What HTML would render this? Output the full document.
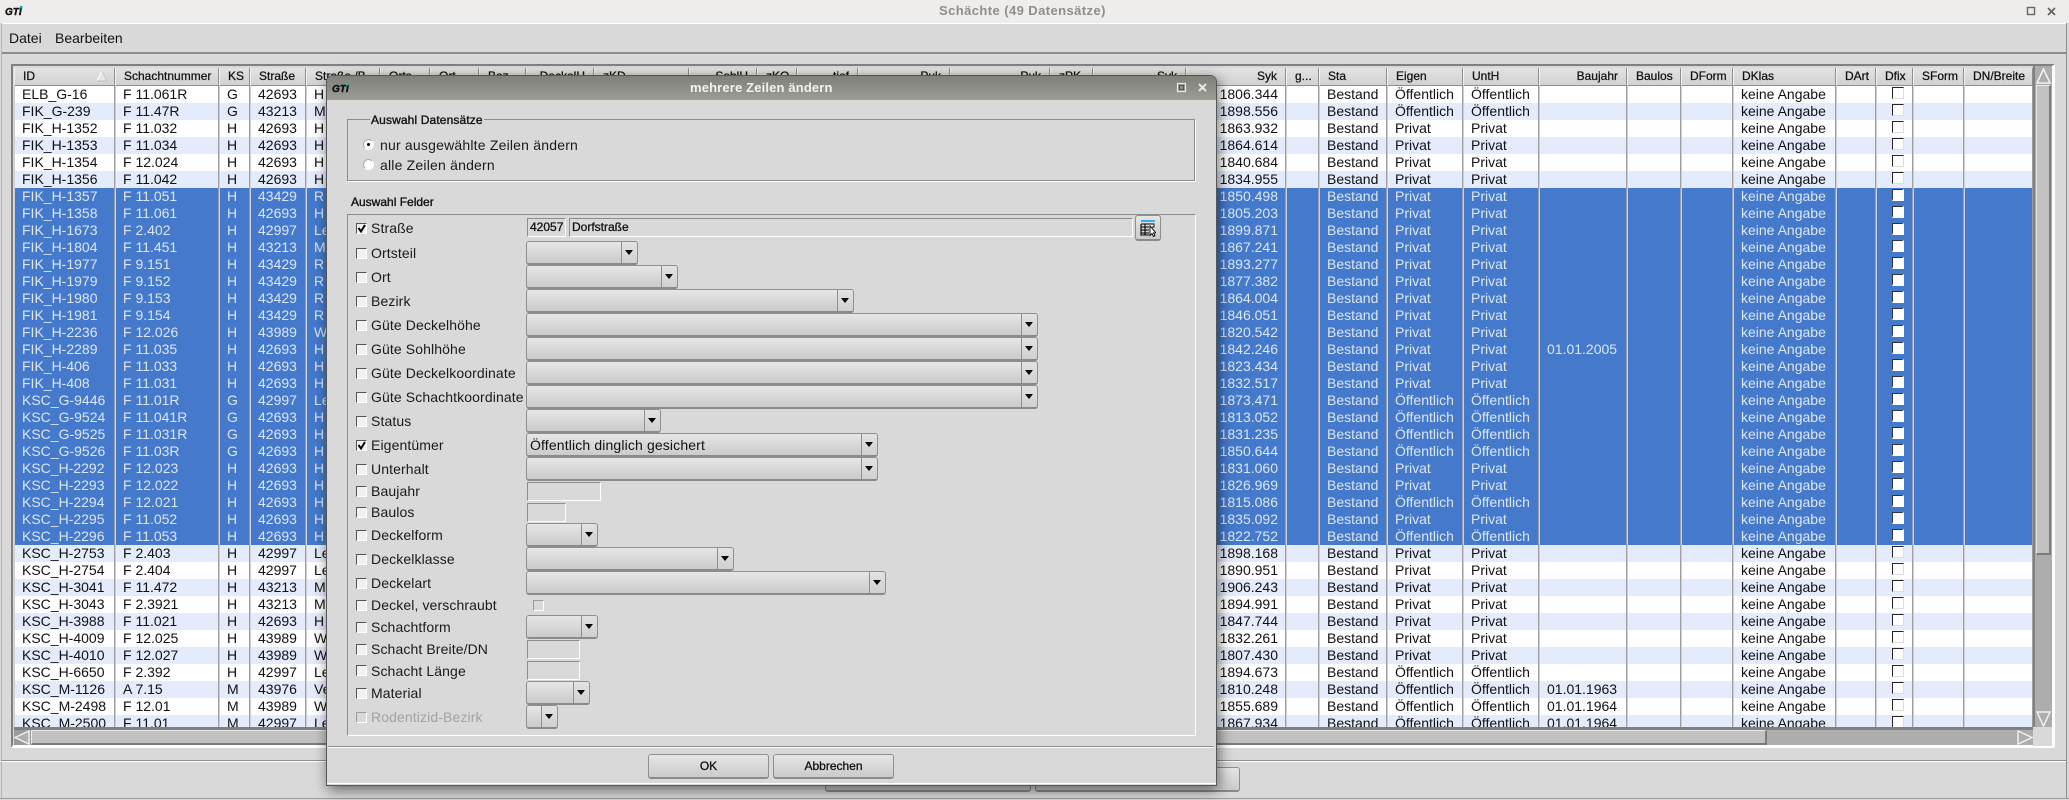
<!DOCTYPE html>
<html lang="de"><head><meta charset="utf-8"><title>Schächte</title>
<style>
*{box-sizing:border-box}
html,body{margin:0;padding:0;width:2069px;height:800px;overflow:hidden;background:#d9d9d9;font-family:"Liberation Sans",sans-serif;color:#111}
.a{position:absolute}
#tb{left:0;top:0;width:2069px;height:23px;background:#eeedeb}
#tt{left:939px;top:2px;font-weight:bold;font-size:13px;line-height:18px;letter-spacing:.42px;color:#8e8e8e;white-space:nowrap}
#mb{left:1px;top:23px;width:2065px;height:31px;background:#d9d9d9;border-top:1px solid #fff;border-bottom:2px solid #8c8c8c;font-size:14px;line-height:28px}
#mb span{position:absolute;top:0}
#fr{left:11px;top:64px;width:2044px;height:684px;border-top:2px solid #808080;border-left:2px solid #808080;border-right:3px solid #fff;border-bottom:3px solid #fff}
#hd,#bd{border-collapse:separate;border-spacing:0;table-layout:fixed}
#hw{left:14px;top:68px;width:2019px;height:18px;overflow:hidden}
#hd{width:2019px;font-size:12px;-webkit-text-stroke:.25px #111}
#hd td{height:18px;line-height:17px;padding:0 8px;white-space:nowrap;overflow:hidden;background:linear-gradient(#e2e2e2,#d2d2d2);border-right:1px solid #8f8f8f;border-left:1px solid #f2f2f2;border-bottom:1px solid #8f8f8f;vertical-align:top}
#hd td.r{text-align:right}
#bw{left:14px;top:86px;width:2019px;height:641px;overflow:hidden;background:#fff}
#bd{width:2019px;font-size:14px}
#bd td{height:17px;line-height:17px;padding:0 0 0 7px;white-space:nowrap;overflow:hidden;border-right:1px solid #9f9f9f;border-left:1px solid #cfcfcf;vertical-align:top;background:#fff;color:#111}
#bd tr:nth-child(even) td{background:#e4ebfc}
#bd tr.s td{background:#4479cc;color:#dbe6f8}
#bd td.r{text-align:right;padding:0 7px 0 0}
#bd td i{display:block;margin:1px 0 0 8px;width:12px;height:12px;background:#fff;border-top:1px solid #222;border-left:1px solid #222;border-right:1px solid #ddd;border-bottom:1px solid #ddd}
#bd tr.s td i{border-top-color:#333;border-left-color:#333;border-right:2px solid #fff;border-bottom:2px solid #fff}
.fl{background:#808080}
#vs{left:2035px;top:66px;width:17px;height:661px;background:#adadad}
#vt{left:2036px;top:85px;width:15px;height:470px;background:#c2c2c2;border-right:2px solid #7a7a7a;border-bottom:2px solid #7a7a7a;border-left:1px solid #e8e8e8;border-top:1px solid #eee}
#hs{left:14px;top:729px;width:2019px;height:16px;background:#adadad;border-top:1px solid #808080}
#ht{left:31px;top:730px;width:1736px;height:15px;background:#c2c2c2;border-right:2px solid #7a7a7a;border-bottom:2px solid #7a7a7a;border-left:1px solid #eee;border-top:1px solid #e8e8e8}
#cn{left:2033px;top:727px;width:19px;height:19px;background:#d9d9d9}
#sp{left:1px;top:760px;width:2065px;height:2px;background:#8f8f8f;border-bottom:1px solid #fff}
#we{left:0;top:798px;width:2069px;height:1px;background:#9a9a9a}
#wr{left:2066px;top:23px;width:1px;height:776px;background:#8f8f8f}
#wl{left:1px;top:23px;width:1px;height:776px;background:#b5b5b5}
.pb{border:1px solid #8f8f8f;border-bottom:2px solid #8a8a8a;border-radius:3px;background:linear-gradient(#e6e6e6,#cbcbcb)}
#dl{left:326px;top:75px;width:891px;height:711px;background:#d9d9d9;border:1px solid #565656;border-radius:7px 7px 0 0;box-shadow:2px 4px 14px rgba(0,0,0,.55)}
#dt{left:327px;top:76px;width:889px;height:24px;background:linear-gradient(#7e8079,#9b9d96);border-radius:6px 6px 0 0}
#dtt{left:690px;top:79px;font-weight:bold;font-size:13px;line-height:18px;letter-spacing:.15px;color:#f2f2ee;white-space:nowrap}
#di{left:327px;top:783px;width:889px;height:1px;background:#fff}
.gb{left:347px;top:119px;width:848px;height:62px;border:1px solid #8c8c8c;box-shadow:1px 1px 0 #fff}
.lg{font-size:12px;line-height:14px;background:#d9d9d9;white-space:nowrap;-webkit-text-stroke:.35px #111}
.fb{left:347px;top:214px;width:849px;height:522px;border-top:1px solid #8c8c8c;border-left:1px solid #8c8c8c;border-right:1px solid #fff;border-bottom:1px solid #fff}
.lb{left:371px;font-size:14px;line-height:18px;white-space:nowrap;color:#1a1a1a;letter-spacing:.11px}
.ck{left:356px;width:11px;height:11px;background:#f1f1f1;border-top:1px solid #555;border-left:1px solid #555;border-right:1px solid #fff;border-bottom:1px solid #fff}
.tx{background:#d9d9d9;border-top:1px solid #8c8c8c;border-left:1px solid #8c8c8c;border-right:1px solid #fff;border-bottom:1px solid #fff;font-size:12px;line-height:16px;padding-left:2px;white-space:nowrap;-webkit-text-stroke:.3px #111}
.cb{left:526px;height:24px;border:1px solid #8f8f8f;border-bottom:2px solid #8a8a8a;border-radius:3px;background:linear-gradient(#e6e6e6,#cbcbcb);font-size:14px;line-height:22px;padding-left:3px;white-space:nowrap;letter-spacing:.14px}
.cb b{position:absolute;right:0;top:0;bottom:0;width:16px;border-left:1px solid #8f8f8f;background:linear-gradient(#e2e2e2,#d0d0d0);border-radius:0 2px 2px 0}
.cb b:after{content:"";position:absolute;left:3px;top:8px;width:0;height:0;border-left:4.5px solid transparent;border-right:4.5px solid transparent;border-top:5px solid #000}
.btn{top:754px;height:25px;width:121px;font-size:12px;line-height:23px;text-align:center;-webkit-text-stroke:.3px #111}
.rd{left:363px;width:11px;height:11px;border-radius:50%;background:#fff;border:1px solid #ababab;border-right-color:#fff;border-bottom-color:#fff}
</style></head><body>
<div class="a" id="tb"></div>
<div class="a" id="tt">Schächte (49 Datensätze)</div>
<svg class="a" style="left:5px;top:5px" width="20" height="11"><text x="0" y="10" font-family="Liberation Sans" font-size="10" font-weight="bold" font-style="italic" fill="#111" stroke="#111" stroke-width=".4">GTI</text><rect x="15" y="1" width="2.5" height="2.5" fill="#1aa"/></svg>
<svg class="a" style="left:2026px;top:6px" width="34" height="11" fill="none" stroke="#666" stroke-width="1.4"><rect x="1.500" y="1.500" width="7" height="7"/><path d="M22 2l7 7M29 2l-7 7" stroke-width="1.800"/></svg>
<div class="a" id="mb"><span style="left:8px">Datei</span><span style="left:54px">Bearbeiten</span></div>
<div class="a" id="wl"></div><div class="a" id="wr"></div>
<div class="a" id="fr"></div>
<div class="a" id="hw"><table id="hd"><colgroup><col style="width:101px"><col style="width:104px"><col style="width:31px"><col style="width:56px"><col style="width:74px"><col style="width:50px"><col style="width:49px"><col style="width:47px"><col style="width:68px"><col style="width:95px"><col style="width:68px"><col style="width:40px"><col style="width:61px"><col style="width:92px"><col style="width:100px"><col style="width:43px"><col style="width:93px"><col style="width:100px"><col style="width:33px"><col style="width:68px"><col style="width:76px"><col style="width:76px"><col style="width:88px"><col style="width:54px"><col style="width:52px"><col style="width:103px"><col style="width:40px"><col style="width:37px"><col style="width:51px"><col style="width:69px"></colgroup><tr><td>ID</td><td>Schachtnummer</td><td>KS</td><td>Straße</td><td>Straße /B</td><td>Orts</td><td>Ort</td><td>Bez</td><td class="r">DeckelH</td><td>zKD</td><td class="r">SohlH</td><td>zKO</td><td class="r">tief</td><td class="r">Puk</td><td class="r">Puk</td><td>zPK</td><td class="r">Syk</td><td class="r">Syk</td><td>g...</td><td>Sta</td><td>Eigen</td><td>UntH</td><td class="r">Baujahr</td><td>Baulos</td><td>DForm</td><td>DKlas</td><td>DArt</td><td>Dfix</td><td>SForm</td><td>DN/Breite</td></tr></table></div>
<svg class="a" style="left:96px;top:70px" width="12" height="12"><path d="M6 1L1 11h10z" fill="#e6e6e6" stroke="#fff"/><path d="M6 1L11 11H1" fill="none" stroke="#aaa" stroke-width=".7"/></svg>
<div class="a" id="bw"><table id="bd"><colgroup><col style="width:101px"><col style="width:104px"><col style="width:31px"><col style="width:56px"><col style="width:880px"><col style="width:100px"><col style="width:33px"><col style="width:68px"><col style="width:76px"><col style="width:76px"><col style="width:88px"><col style="width:54px"><col style="width:52px"><col style="width:103px"><col style="width:40px"><col style="width:37px"><col style="width:51px"><col style="width:69px"></colgroup>
<tr><td>ELB_G-16</td><td>F 11.061R</td><td>G</td><td>42693</td><td>H</td><td class="r">1806.344</td><td></td><td>Bestand</td><td>Öffentlich</td><td>Öffentlich</td><td></td><td></td><td></td><td>keine Angabe</td><td></td><td><i></i></td><td></td><td></td></tr>
<tr><td>FIK_G-239</td><td>F 11.47R</td><td>G</td><td>43213</td><td>M</td><td class="r">1898.556</td><td></td><td>Bestand</td><td>Öffentlich</td><td>Öffentlich</td><td></td><td></td><td></td><td>keine Angabe</td><td></td><td><i></i></td><td></td><td></td></tr>
<tr><td>FIK_H-1352</td><td>F 11.032</td><td>H</td><td>42693</td><td>H</td><td class="r">1863.932</td><td></td><td>Bestand</td><td>Privat</td><td>Privat</td><td></td><td></td><td></td><td>keine Angabe</td><td></td><td><i></i></td><td></td><td></td></tr>
<tr><td>FIK_H-1353</td><td>F 11.034</td><td>H</td><td>42693</td><td>H</td><td class="r">1864.614</td><td></td><td>Bestand</td><td>Privat</td><td>Privat</td><td></td><td></td><td></td><td>keine Angabe</td><td></td><td><i></i></td><td></td><td></td></tr>
<tr><td>FIK_H-1354</td><td>F 12.024</td><td>H</td><td>42693</td><td>H</td><td class="r">1840.684</td><td></td><td>Bestand</td><td>Privat</td><td>Privat</td><td></td><td></td><td></td><td>keine Angabe</td><td></td><td><i></i></td><td></td><td></td></tr>
<tr><td>FIK_H-1356</td><td>F 11.042</td><td>H</td><td>42693</td><td>H</td><td class="r">1834.955</td><td></td><td>Bestand</td><td>Privat</td><td>Privat</td><td></td><td></td><td></td><td>keine Angabe</td><td></td><td><i></i></td><td></td><td></td></tr>
<tr class="s"><td>FIK_H-1357</td><td>F 11.051</td><td>H</td><td>43429</td><td>R</td><td class="r">1850.498</td><td></td><td>Bestand</td><td>Privat</td><td>Privat</td><td></td><td></td><td></td><td>keine Angabe</td><td></td><td><i></i></td><td></td><td></td></tr>
<tr class="s"><td>FIK_H-1358</td><td>F 11.061</td><td>H</td><td>42693</td><td>H</td><td class="r">1805.203</td><td></td><td>Bestand</td><td>Privat</td><td>Privat</td><td></td><td></td><td></td><td>keine Angabe</td><td></td><td><i></i></td><td></td><td></td></tr>
<tr class="s"><td>FIK_H-1673</td><td>F 2.402</td><td>H</td><td>42997</td><td>Le</td><td class="r">1899.871</td><td></td><td>Bestand</td><td>Privat</td><td>Privat</td><td></td><td></td><td></td><td>keine Angabe</td><td></td><td><i></i></td><td></td><td></td></tr>
<tr class="s"><td>FIK_H-1804</td><td>F 11.451</td><td>H</td><td>43213</td><td>M</td><td class="r">1867.241</td><td></td><td>Bestand</td><td>Privat</td><td>Privat</td><td></td><td></td><td></td><td>keine Angabe</td><td></td><td><i></i></td><td></td><td></td></tr>
<tr class="s"><td>FIK_H-1977</td><td>F 9.151</td><td>H</td><td>43429</td><td>R</td><td class="r">1893.277</td><td></td><td>Bestand</td><td>Privat</td><td>Privat</td><td></td><td></td><td></td><td>keine Angabe</td><td></td><td><i></i></td><td></td><td></td></tr>
<tr class="s"><td>FIK_H-1979</td><td>F 9.152</td><td>H</td><td>43429</td><td>R</td><td class="r">1877.382</td><td></td><td>Bestand</td><td>Privat</td><td>Privat</td><td></td><td></td><td></td><td>keine Angabe</td><td></td><td><i></i></td><td></td><td></td></tr>
<tr class="s"><td>FIK_H-1980</td><td>F 9.153</td><td>H</td><td>43429</td><td>R</td><td class="r">1864.004</td><td></td><td>Bestand</td><td>Privat</td><td>Privat</td><td></td><td></td><td></td><td>keine Angabe</td><td></td><td><i></i></td><td></td><td></td></tr>
<tr class="s"><td>FIK_H-1981</td><td>F 9.154</td><td>H</td><td>43429</td><td>R</td><td class="r">1846.051</td><td></td><td>Bestand</td><td>Privat</td><td>Privat</td><td></td><td></td><td></td><td>keine Angabe</td><td></td><td><i></i></td><td></td><td></td></tr>
<tr class="s"><td>FIK_H-2236</td><td>F 12.026</td><td>H</td><td>43989</td><td>W</td><td class="r">1820.542</td><td></td><td>Bestand</td><td>Privat</td><td>Privat</td><td></td><td></td><td></td><td>keine Angabe</td><td></td><td><i></i></td><td></td><td></td></tr>
<tr class="s"><td>FIK_H-2289</td><td>F 11.035</td><td>H</td><td>42693</td><td>H</td><td class="r">1842.246</td><td></td><td>Bestand</td><td>Privat</td><td>Privat</td><td>01.01.2005</td><td></td><td></td><td>keine Angabe</td><td></td><td><i></i></td><td></td><td></td></tr>
<tr class="s"><td>FIK_H-406</td><td>F 11.033</td><td>H</td><td>42693</td><td>H</td><td class="r">1823.434</td><td></td><td>Bestand</td><td>Privat</td><td>Privat</td><td></td><td></td><td></td><td>keine Angabe</td><td></td><td><i></i></td><td></td><td></td></tr>
<tr class="s"><td>FIK_H-408</td><td>F 11.031</td><td>H</td><td>42693</td><td>H</td><td class="r">1832.517</td><td></td><td>Bestand</td><td>Privat</td><td>Privat</td><td></td><td></td><td></td><td>keine Angabe</td><td></td><td><i></i></td><td></td><td></td></tr>
<tr class="s"><td>KSC_G-9446</td><td>F 11.01R</td><td>G</td><td>42997</td><td>Le</td><td class="r">1873.471</td><td></td><td>Bestand</td><td>Öffentlich</td><td>Öffentlich</td><td></td><td></td><td></td><td>keine Angabe</td><td></td><td><i></i></td><td></td><td></td></tr>
<tr class="s"><td>KSC_G-9524</td><td>F 11.041R</td><td>G</td><td>42693</td><td>H</td><td class="r">1813.052</td><td></td><td>Bestand</td><td>Öffentlich</td><td>Öffentlich</td><td></td><td></td><td></td><td>keine Angabe</td><td></td><td><i></i></td><td></td><td></td></tr>
<tr class="s"><td>KSC_G-9525</td><td>F 11.031R</td><td>G</td><td>42693</td><td>H</td><td class="r">1831.235</td><td></td><td>Bestand</td><td>Öffentlich</td><td>Öffentlich</td><td></td><td></td><td></td><td>keine Angabe</td><td></td><td><i></i></td><td></td><td></td></tr>
<tr class="s"><td>KSC_G-9526</td><td>F 11.03R</td><td>G</td><td>42693</td><td>H</td><td class="r">1850.644</td><td></td><td>Bestand</td><td>Öffentlich</td><td>Öffentlich</td><td></td><td></td><td></td><td>keine Angabe</td><td></td><td><i></i></td><td></td><td></td></tr>
<tr class="s"><td>KSC_H-2292</td><td>F 12.023</td><td>H</td><td>42693</td><td>H</td><td class="r">1831.060</td><td></td><td>Bestand</td><td>Privat</td><td>Privat</td><td></td><td></td><td></td><td>keine Angabe</td><td></td><td><i></i></td><td></td><td></td></tr>
<tr class="s"><td>KSC_H-2293</td><td>F 12.022</td><td>H</td><td>42693</td><td>H</td><td class="r">1826.969</td><td></td><td>Bestand</td><td>Privat</td><td>Privat</td><td></td><td></td><td></td><td>keine Angabe</td><td></td><td><i></i></td><td></td><td></td></tr>
<tr class="s"><td>KSC_H-2294</td><td>F 12.021</td><td>H</td><td>42693</td><td>H</td><td class="r">1815.086</td><td></td><td>Bestand</td><td>Öffentlich</td><td>Öffentlich</td><td></td><td></td><td></td><td>keine Angabe</td><td></td><td><i></i></td><td></td><td></td></tr>
<tr class="s"><td>KSC_H-2295</td><td>F 11.052</td><td>H</td><td>42693</td><td>H</td><td class="r">1835.092</td><td></td><td>Bestand</td><td>Privat</td><td>Privat</td><td></td><td></td><td></td><td>keine Angabe</td><td></td><td><i></i></td><td></td><td></td></tr>
<tr class="s"><td>KSC_H-2296</td><td>F 11.053</td><td>H</td><td>42693</td><td>H</td><td class="r">1822.752</td><td></td><td>Bestand</td><td>Öffentlich</td><td>Öffentlich</td><td></td><td></td><td></td><td>keine Angabe</td><td></td><td><i></i></td><td></td><td></td></tr>
<tr><td>KSC_H-2753</td><td>F 2.403</td><td>H</td><td>42997</td><td>Le</td><td class="r">1898.168</td><td></td><td>Bestand</td><td>Privat</td><td>Privat</td><td></td><td></td><td></td><td>keine Angabe</td><td></td><td><i></i></td><td></td><td></td></tr>
<tr><td>KSC_H-2754</td><td>F 2.404</td><td>H</td><td>42997</td><td>Le</td><td class="r">1890.951</td><td></td><td>Bestand</td><td>Privat</td><td>Privat</td><td></td><td></td><td></td><td>keine Angabe</td><td></td><td><i></i></td><td></td><td></td></tr>
<tr><td>KSC_H-3041</td><td>F 11.472</td><td>H</td><td>43213</td><td>M</td><td class="r">1906.243</td><td></td><td>Bestand</td><td>Privat</td><td>Privat</td><td></td><td></td><td></td><td>keine Angabe</td><td></td><td><i></i></td><td></td><td></td></tr>
<tr><td>KSC_H-3043</td><td>F 2.3921</td><td>H</td><td>43213</td><td>M</td><td class="r">1894.991</td><td></td><td>Bestand</td><td>Privat</td><td>Privat</td><td></td><td></td><td></td><td>keine Angabe</td><td></td><td><i></i></td><td></td><td></td></tr>
<tr><td>KSC_H-3988</td><td>F 11.021</td><td>H</td><td>42693</td><td>H</td><td class="r">1847.744</td><td></td><td>Bestand</td><td>Privat</td><td>Privat</td><td></td><td></td><td></td><td>keine Angabe</td><td></td><td><i></i></td><td></td><td></td></tr>
<tr><td>KSC_H-4009</td><td>F 12.025</td><td>H</td><td>43989</td><td>W</td><td class="r">1832.261</td><td></td><td>Bestand</td><td>Privat</td><td>Privat</td><td></td><td></td><td></td><td>keine Angabe</td><td></td><td><i></i></td><td></td><td></td></tr>
<tr><td>KSC_H-4010</td><td>F 12.027</td><td>H</td><td>43989</td><td>W</td><td class="r">1807.430</td><td></td><td>Bestand</td><td>Privat</td><td>Privat</td><td></td><td></td><td></td><td>keine Angabe</td><td></td><td><i></i></td><td></td><td></td></tr>
<tr><td>KSC_H-6650</td><td>F 2.392</td><td>H</td><td>42997</td><td>Le</td><td class="r">1894.673</td><td></td><td>Bestand</td><td>Öffentlich</td><td>Öffentlich</td><td></td><td></td><td></td><td>keine Angabe</td><td></td><td><i></i></td><td></td><td></td></tr>
<tr><td>KSC_M-1126</td><td>A 7.15</td><td>M</td><td>43976</td><td>Ve</td><td class="r">1810.248</td><td></td><td>Bestand</td><td>Öffentlich</td><td>Öffentlich</td><td>01.01.1963</td><td></td><td></td><td>keine Angabe</td><td></td><td><i></i></td><td></td><td></td></tr>
<tr><td>KSC_M-2498</td><td>F 12.01</td><td>M</td><td>43989</td><td>W</td><td class="r">1855.689</td><td></td><td>Bestand</td><td>Öffentlich</td><td>Öffentlich</td><td>01.01.1964</td><td></td><td></td><td>keine Angabe</td><td></td><td><i></i></td><td></td><td></td></tr>
<tr><td>KSC_M-2500</td><td>F 11.01</td><td>M</td><td>42997</td><td>Le</td><td class="r">1867.934</td><td></td><td>Bestand</td><td>Öffentlich</td><td>Öffentlich</td><td>01.01.1964</td><td></td><td></td><td>keine Angabe</td><td></td><td><i></i></td><td></td><td></td></tr>
</table></div>
<div class="a fl" style="left:14px;top:727px;width:2021px;height:2px"></div>
<div class="a fl" style="left:2033px;top:66px;width:2px;height:663px"></div>
<div class="a" id="vs"></div><div class="a" id="vt"></div>
<div class="a" id="hs"></div><div class="a" id="ht"></div>
<div class="a" id="cn"></div>
<svg class="a" style="left:2036px;top:68px" width="15" height="16"><path d="M7.500 1L1 15h13z" fill="#adadad" stroke="#f4f4f4" stroke-width="1.500"/></svg>
<svg class="a" style="left:2036px;top:711px" width="15" height="16"><path d="M7.500 15L1 1h13z" fill="#adadad" stroke="#f0f0f0" stroke-width="1.500"/></svg>
<svg class="a" style="left:14px;top:730px" width="17" height="15"><rect width="17" height="15" fill="#9a9a9a"/><path d="M1 7.500L15 1v13z" fill="#adadad" stroke="#f0f0f0" stroke-width="1.500"/></svg>
<svg class="a" style="left:2017px;top:730px" width="16" height="15"><path d="M15 7.500L1 1v13z" fill="#adadad" stroke="#f0f0f0" stroke-width="1.500"/></svg>
<div class="a" id="sp"></div>
<div class="a" id="we"></div>
<div class="a pb" style="left:825px;top:767px;width:206px;height:25px"></div>
<div class="a pb" style="left:1035px;top:767px;width:205px;height:25px"></div>

<div class="a" id="dl"></div>
<div class="a" id="dt"></div>
<div class="a" id="di"></div>
<svg class="a" style="left:332px;top:82px" width="20" height="11"><text x="0" y="10" font-family="Liberation Sans" font-size="10" font-weight="bold" font-style="italic" fill="#111" stroke="#111" stroke-width=".4">GTI</text><rect x="14" y="1" width="2.500" height="2.500" fill="#1bb"/></svg>
<div class="a" id="dtt">mehrere Zeilen ändern</div>
<svg class="a" style="left:1176px;top:82px" width="34" height="12" fill="none" stroke="#e8e8e4"><rect x="1.500" y="1.500" width="8" height="8" stroke-width="1.200"/><rect x="3.500" y="3.500" width="4" height="4" stroke="#555" stroke-width="1"/><path d="M23 2l7 7M30 2l-7 7" stroke-width="2"/></svg>

<div class="a gb"></div>
<div class="a lg" style="left:370px;top:113px;padding:0 1px;letter-spacing:.13px">Auswahl Datensätze</div>
<div class="a rd" style="top:139px"></div>
<div class="a" style="left:367px;top:143px;width:3px;height:3px;background:#000;border-radius:50%"></div>
<div class="a lb" style="left:380px;top:136px;letter-spacing:.2px">nur ausgewählte Zeilen ändern</div>
<div class="a rd" style="top:159px"></div>
<div class="a lb" style="left:380px;top:156px;letter-spacing:.2px">alle Zeilen ändern</div>

<div class="a lg" style="left:351px;top:195px">Auswahl Felder</div>
<div class="a fb"></div>

<div class="a lb" style="top:219px">Straße</div>
<div class="a lb" style="top:244px">Ortsteil</div>
<div class="a lb" style="top:268px">Ort</div>
<div class="a lb" style="top:292px">Bezirk</div>
<div class="a lb" style="top:316px">Güte Deckelhöhe</div>
<div class="a lb" style="top:340px">Güte Sohlhöhe</div>
<div class="a lb" style="top:364px">Güte Deckelkoordinate</div>
<div class="a lb" style="top:388px">Güte Schachtkoordinate</div>
<div class="a lb" style="top:412px">Status</div>
<div class="a lb" style="top:436px">Eigentümer</div>
<div class="a lb" style="top:460px">Unterhalt</div>
<div class="a lb" style="top:482px">Baujahr</div>
<div class="a lb" style="top:503px">Baulos</div>
<div class="a lb" style="top:526px">Deckelform</div>
<div class="a lb" style="top:550px">Deckelklasse</div>
<div class="a lb" style="top:574px">Deckelart</div>
<div class="a lb" style="top:596px">Deckel, verschraubt</div>
<div class="a lb" style="top:618px">Schachtform</div>
<div class="a lb" style="top:640px">Schacht Breite/DN</div>
<div class="a lb" style="top:662px">Schacht Länge</div>
<div class="a lb" style="top:684px">Material</div>
<div class="a lb" style="top:708px;color:#a3a3a3">Rodentizid-Bezirk</div>

<div class="a ck" style="top:223px"></div>
<div class="a ck" style="top:248px"></div>
<div class="a ck" style="top:272px"></div>
<div class="a ck" style="top:296px"></div>
<div class="a ck" style="top:320px"></div>
<div class="a ck" style="top:344px"></div>
<div class="a ck" style="top:368px"></div>
<div class="a ck" style="top:392px"></div>
<div class="a ck" style="top:416px"></div>
<div class="a ck" style="top:440px"></div>
<div class="a ck" style="top:464px"></div>
<div class="a ck" style="top:486px"></div>
<div class="a ck" style="top:507px"></div>
<div class="a ck" style="top:530px"></div>
<div class="a ck" style="top:554px"></div>
<div class="a ck" style="top:578px"></div>
<div class="a ck" style="top:600px"></div>
<div class="a ck" style="top:622px"></div>
<div class="a ck" style="top:644px"></div>
<div class="a ck" style="top:665px"></div>
<div class="a ck" style="top:688px"></div>
<div class="a ck" style="top:712px;background:#d9d9d9;border-color:#9d9d9d #fff #fff #9d9d9d"></div>
<svg class="a" style="left:356px;top:223px" width="11" height="11"><path d="M2.500 5l2.500 3.500L9 2" fill="none" stroke="#000" stroke-width="2"/></svg>
<svg class="a" style="left:356px;top:440px" width="11" height="11"><path d="M2.500 5l2.500 3.500L9 2" fill="none" stroke="#000" stroke-width="2"/></svg>

<div class="a tx" style="left:527px;top:218px;width:39px;height:19px">42057</div>
<div class="a tx" style="left:569px;top:218px;width:564px;height:19px">Dorfstraße</div>
<div class="a pb" style="left:1135px;top:215px;width:26px;height:26px"></div>
<svg class="a" style="left:1140px;top:219px" width="16" height="18"><rect x="1" y="1" width="14" height="2" fill="#2fb0f0"/><path d="M1 5h8M1 5v11h8M1 8h8M1 11h8M1 14h8M5 5v11" fill="none" stroke="#000" stroke-width="1.100"/><path d="M9 5h5v3h-2M10 7v9.500l2-2 1.500 3 1.500-.8-1.500-2.800h2.500z" fill="#fff" stroke="#000" stroke-width=".9"/></svg>

<div class="a cb" style="top:241px;width:112px"><b></b></div>
<div class="a cb" style="top:265px;width:152px"><b></b></div>
<div class="a cb" style="top:289px;width:328px"><b></b></div>
<div class="a cb" style="top:313px;width:512px"><b></b></div>
<div class="a cb" style="top:337px;width:512px"><b></b></div>
<div class="a cb" style="top:361px;width:512px"><b></b></div>
<div class="a cb" style="top:385px;width:512px"><b></b></div>
<div class="a cb" style="top:409px;width:135px"><b></b></div>
<div class="a cb" style="top:433px;width:352px">Öffentlich dinglich gesichert<b></b></div>
<div class="a cb" style="top:457px;width:352px"><b></b></div>
<div class="a cb" style="top:523px;width:72px"><b></b></div>
<div class="a cb" style="top:547px;width:208px"><b></b></div>
<div class="a cb" style="top:571px;width:360px"><b></b></div>
<div class="a cb" style="top:615px;width:72px"><b></b></div>
<div class="a cb" style="top:681px;width:64px"><b></b></div>
<div class="a cb" style="top:705px;width:32px"><b></b></div>

<div class="a tx" style="left:527px;top:482px;width:74px;height:19px"></div>
<div class="a tx" style="left:527px;top:503px;width:39px;height:19px"></div>
<div class="a tx" style="left:527px;top:640px;width:53px;height:19px"></div>
<div class="a tx" style="left:527px;top:661px;width:53px;height:19px"></div>
<div class="a ck" style="left:533px;top:600px;background:#d9d9d9;border-color:#9d9d9d #fff #fff #9d9d9d"></div>

<div class="a" style="left:328px;top:746px;width:886px;height:2px;background:#8f8f8f;border-bottom:1px solid #fff"></div>
<div class="a pb btn" style="left:648px">OK</div>
<div class="a pb btn" style="left:773px">Abbrechen</div>
</body></html>
